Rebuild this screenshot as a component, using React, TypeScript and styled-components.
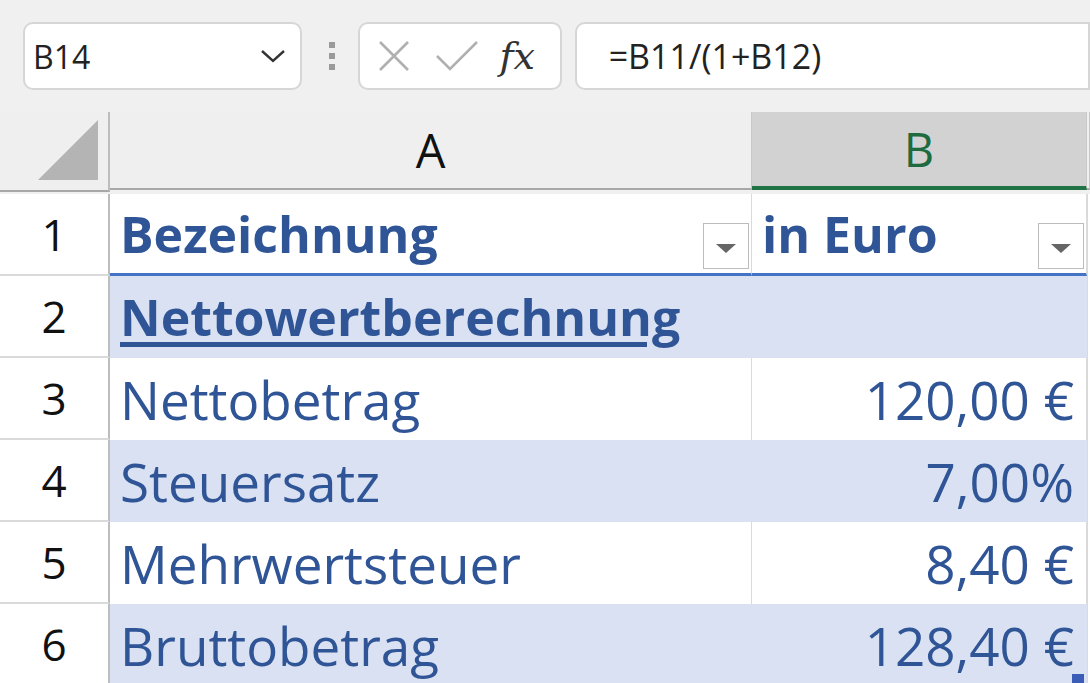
import React from "react";
import styled, { createGlobalStyle } from "styled-components";

const Global = createGlobalStyle`
  html, body { margin: 0; padding: 0; background: #f0f0f0; overflow: hidden; }
  body { font-family: "Open Sans", "Noto Sans", sans-serif; }
`;

const Page = styled.div`
  width: 1090px; height: 683px; overflow: hidden; background: #f0f0f0;
`;
const Bar = styled.div`
  height: 112px; display: flex; align-items: flex-start; padding-top: 22px; box-sizing: border-box;
`;
const Box = styled.div<{ w: number; ml: number }>`
  width: ${(p) => p.w}px; margin-left: ${(p) => p.ml}px; height: 68px; box-sizing: border-box;
  background: #fff; border: 2px solid #d6d6d6; border-radius: 10px;
  display: flex; align-items: center; font-size: 32px; color: #222;
`;
const NameText = styled.span` flex: 1; padding-left: 8px; `;
const Dots = styled.div`
  margin-left: 27px; width: 6px; height: 68px; display: flex; flex-direction: column; justify-content: center; gap: 5px;
  & > i { display: block; width: 6px; height: 6px; background: #9a9a9a; }
`;
const Fx = styled.span`
  font-family: "DejaVu Serif", "Liberation Serif", serif; font-style: italic; font-size: 38px; color: #333; margin-left: 20px;
`;
const Formula = styled.span` padding-left: 32px; font-size: 34px; `;
const Grid = styled.div`
  display: grid; grid-template-columns: 110px 642px 335px 3px; grid-auto-rows: 82px;
`;
const Corner = styled.div`
  background: #efefef; border-right: 2px solid #bdbdbd; border-bottom: 2px solid #a8a8a8; position: relative; height: 78px;
`;
const Tri = styled.div`
  position: absolute; right: 10px; bottom: 10px; width: 0; height: 0;
  border-left: 60px solid transparent; border-bottom: 60px solid #b4b4b4;
`;
const ColHead = styled.div<{ sel?: boolean }>`
  height: 78px; box-sizing: border-box; display: flex; align-items: center; justify-content: center;
  font-size: 47px; background: ${(p) => (p.sel ? "#d2d2d2" : "#efefef")};
  color: ${(p) => (p.sel ? "#1e6b3f" : "#111")};
  border-right: 1px solid #c8c8c8;
  border-bottom: ${(p) => (p.sel ? "4px solid #217346" : "2px solid #a8a8a8")};
`;
const RowHead = styled.div`
  background: #fff; border-right: 2px solid #bdbdbd; border-bottom: 2px solid #dadada; box-sizing: border-box;
  display: flex; align-items: center; justify-content: center; font-size: 44px; color: #111;
`;
const Cell = styled.div<{ band?: boolean; right?: boolean; bold?: boolean; head?: boolean; span?: boolean }>`
  box-sizing: border-box; display: flex; align-items: center; position: relative;
  justify-content: ${(p) => (p.right ? "flex-end" : "flex-start")};
  padding: 0 ${(p) => (p.right ? "12px" : "10px")};
  font-size: ${(p) => (p.bold ? "50px" : "53px")}; color: #2f5597; font-weight: ${(p) => (p.bold ? 700 : 400)};
  background: ${(p) => (p.band ? "#d9e1f2" : "#fff")};
  border-right: 1px solid ${(p) => (p.band ? "#d9e1f2" : "#dadada")};
  border-bottom: ${(p) => (p.head ? "3px solid #4472c4" : "none")};
  grid-column: ${(p) => (p.span ? "span 2" : "auto")};
  white-space: nowrap;
`;
const Edge = styled.div` background: #fff; border-left: 1px solid #dadada; `;
const Filter = styled.div`
  position: absolute; right: 2px; bottom: 4px; width: 46px; height: 46px; box-sizing: border-box;
  border: 1px solid #bcbcbc; background: #fff; display: flex; align-items: center; justify-content: center;
  &::after { content: ""; border-left: 10px solid transparent; border-right: 10px solid transparent; border-top: 9px solid #666; margin-top: 4px; }
`;
const Link = styled.span` text-decoration: underline; text-underline-offset: 6px; `;
const Handle = styled.div`
  position: absolute; right: 2px; bottom: 0; width: 12px; height: 12px; background: #3b5db8;
`;

const rows = [
  { n: 3, a: "Nettobetrag", b: "120,00 €", band: false },
  { n: 4, a: "Steuersatz", b: "7,00%", band: true },
  { n: 5, a: "Mehrwertsteuer", b: "8,40 €", band: false },
  { n: 6, a: "Bruttobetrag", b: "128,40 €", band: true },
];

export default function App() {
  return (
    <Page>
      <Global />
      <Bar>
        <Box w={282} ml={23}>
          <NameText>B14</NameText>
          <svg width="26" height="16" viewBox="0 0 26 16" style={{ marginRight: 14 }}>
            <path d="M2 3 L13 13 L24 3" fill="none" stroke="#333" strokeWidth="2.4" />
          </svg>
        </Box>
        <Dots><i /><i /><i /></Dots>
        <Box w={205} ml={23}>
          <svg width="34" height="34" viewBox="0 0 34 34" style={{ marginLeft: 17 }}>
            <path d="M3 3 L31 31 M31 3 L3 31" stroke="#b0b0b0" strokeWidth="2.6" />
          </svg>
          <svg width="44" height="34" viewBox="0 0 44 34" style={{ marginLeft: 24 }}>
            <path d="M2 17 L15 30 L42 3" fill="none" stroke="#b0b0b0" strokeWidth="2.6" />
          </svg>
          <Fx>fx</Fx>
        </Box>
        <Box w={520} ml={13} style={{ borderRadius: "10px 0 0 10px" }}>
          <Formula>=B11/(1+B12)</Formula>
        </Box>
      </Bar>
      <Grid>
        <Corner><Tri /></Corner>
        <ColHead>A</ColHead>
        <ColHead sel>B</ColHead>
        <ColHead />
        <RowHead>1</RowHead>
        <Cell bold head>Bezeichnung<Filter /></Cell>
        <Cell bold head>in Euro<Filter /></Cell>
        <Edge />
        <RowHead>2</RowHead>
        <Cell bold band span><Link>Nettowertberechnung</Link></Cell>
        <Edge />
        {rows.map((r) => (
          <React.Fragment key={r.n}>
            <RowHead>{r.n}</RowHead>
            <Cell band={r.band}>{r.a}</Cell>
            <Cell band={r.band} right>{r.b}{r.n === 6 && <Handle />}</Cell>
            <Edge />
          </React.Fragment>
        ))}
      </Grid>
    </Page>
  );
}
